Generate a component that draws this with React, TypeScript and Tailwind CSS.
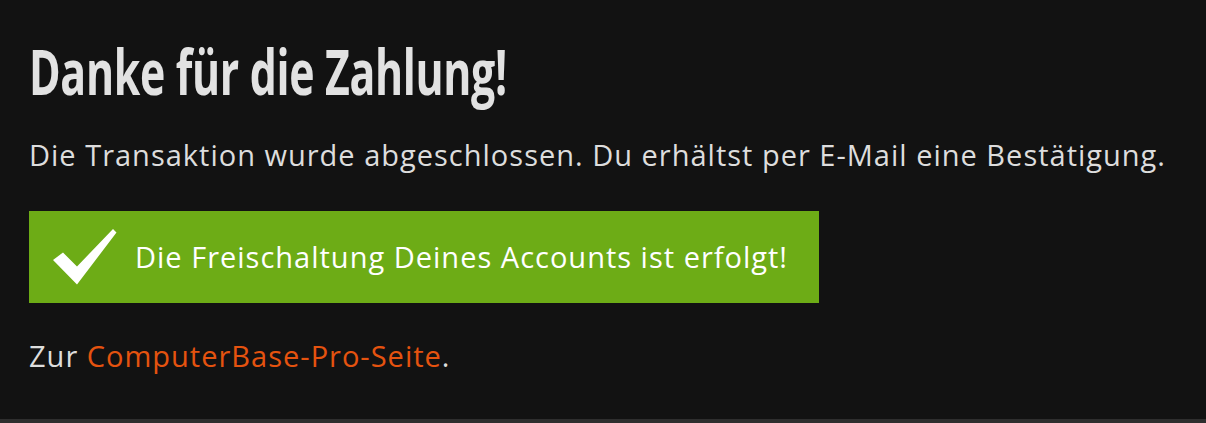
export default function App() {
  return (
    <div className="min-h-[423px] w-full bg-[#2e2e2e]" style={{ fontFamily: '"Open Sans", "Noto Sans", sans-serif' }}>
      <div className="h-[419px] bg-[#121212] pl-[29px] pt-[39px]">
        <h1 className="origin-left scale-x-[0.68] whitespace-nowrap text-[63px] font-bold leading-[63px] tracking-[-0.5px] text-[#e2e2e2]">
          Danke für die Zahlung!
        </h1>
        <p className="mt-[33px] whitespace-nowrap text-[29px] leading-[40px] tracking-[1px] text-[#dddddd]">
          Die Transaktion wurde abgeschlossen. Du erhältst per E-Mail eine Bestätigung.
        </p>
        <div className="mt-[36px] flex h-[92px] w-[790px] items-center bg-[#6dac16]">
          <svg width="64" height="56" viewBox="0 0 64 56" className="ml-[24px] shrink-0">
            <polygon points="0,31 10,23.5 24,37.5 60,0 63.5,3.5 24,55.5" fill="#ffffff" />
          </svg>
          <span className="ml-[18px] whitespace-nowrap text-[29px] leading-[40px] tracking-[1px] text-white">
            Die Freischaltung Deines Accounts ist erfolgt!
          </span>
        </div>
        <p className="mt-[33px] whitespace-nowrap text-[29px] leading-[40px] tracking-[1px] text-[#dddddd]">
          Zur <a className="text-[#e5530f]">ComputerBase-Pro-Seite</a>.
        </p>
      </div>
    </div>
  );
}
